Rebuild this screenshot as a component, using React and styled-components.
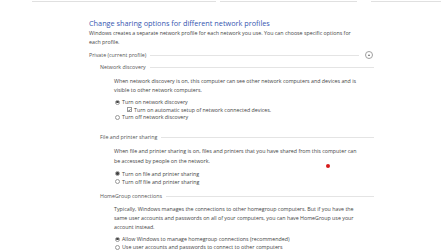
import React from "react";
import styled, { createGlobalStyle } from "styled-components";

const Global = createGlobalStyle`
  html, body { margin: 0; padding: 0; background: #ffffff; }
  body {
    width: 442px; height: 252px; overflow: hidden;
    font-family: "Open Sans", "Noto Sans", "DejaVu Sans", sans-serif;
    color: #333;
    -webkit-font-smoothing: antialiased;
  }
`;

const Page = styled.div`
  position: relative;
  width: 442px;
  height: 252px;
  overflow: hidden;
`;

const TopBar = styled.div`
  display: flex;
  height: 2px;
  padding-left: 32px;
  gap: 4px;
`;

const TopBox = styled.div`
  width: ${(p) => p.w}px;
  height: 1px;
  border-bottom: 1px solid #e0e0e0;
  box-sizing: content-box;
  margin-left: ${(p) => p.ml || 0}px;
`;

const Content = styled.div`
  padding: 15px 68px 0 89px;
`;

const Title = styled.div`
  font-size: 7.3px;
  line-height: 12px;
  color: #3556b0;
  white-space: nowrap;
`;

const Para = styled.div`
  font-size: 5.3px;
  line-height: ${(p) => p.lh || 9}px;
  color: #444;
  white-space: nowrap;
  margin-top: ${(p) => p.mt || 0}px;
  margin-left: ${(p) => p.ml || 0}px;
`;

const HeaderRow = styled.div`
  display: flex;
  align-items: center;
  height: 10px;
  margin-top: ${(p) => p.mt || 0}px;
  margin-left: ${(p) => p.ml || 0}px;
  gap: 4px;
`;

const HeaderLabel = styled.span`
  font-size: 5.3px;
  color: #555;
  white-space: nowrap;
`;

const Rule = styled.div`
  flex: 1;
  height: 1px;
  background: #e4e4e4;
`;

const CollapseBtn = styled.div`
  width: 8px;
  height: 8px;
  border-radius: 50%;
  border: 1px solid #a0a0a0;
  box-sizing: border-box;
  display: flex;
  align-items: center;
  justify-content: center;
  margin-left: 2px;
  margin-right: 1px;
  &::after {
    content: "";
    width: 0;
    height: 0;
    border-left: 1.6px solid transparent;
    border-right: 1.6px solid transparent;
    border-bottom: 2px solid #666;
    margin-top: -0.5px;
  }
`;

const Options = styled.div`
  margin-top: ${(p) => p.mt || 0}px;
  margin-left: 26px;
`;

const Option = styled.div`
  display: flex;
  align-items: center;
  height: ${(p) => p.h || 8}px;
  gap: 2px;
  margin-left: ${(p) => p.ml || 0}px;
`;

const Radio = styled.span`
  width: 5px;
  height: 5px;
  border-radius: 50%;
  border: 0.6px solid #999;
  box-sizing: border-box;
  background: #fff;
  display: inline-flex;
  align-items: center;
  justify-content: center;
  flex: none;
  &::after {
    content: "";
    width: 2.4px;
    height: 2.4px;
    border-radius: 50%;
    background: ${(p) => (p.on ? "#444" : "transparent")};
  }
`;

const Check = styled.span`
  width: 5px;
  height: 5px;
  border: 0.6px solid #999;
  box-sizing: border-box;
  background: #fff;
  display: inline-flex;
  align-items: center;
  justify-content: center;
  flex: none;
  svg { display: block; }
`;

const OptLabel = styled.span`
  font-size: 5.3px;
  color: #444;
  white-space: nowrap;
`;

const Cursor = styled.div`
  position: absolute;
  left: 326px;
  top: 164px;
  width: 4px;
  height: 4px;
  border-radius: 50%;
  background: #d61b1b;
`;

export default function App() {
  return (
    <Page>
      <Global />
      <TopBar>
        <TopBox w={184} />
        <TopBox w={137} />
        <TopBox w={70} ml={10} />
      </TopBar>
      <Content>
        <Title>Change sharing options for different network profiles</Title>
        <Para>
          Windows creates a separate network profile for each network you use. You can choose specific options for
          <br />
          each profile.
        </Para>

        <HeaderRow mt={3}>
          <HeaderLabel>Private (current profile)</HeaderLabel>
          <Rule />
          <CollapseBtn />
        </HeaderRow>

        <HeaderRow mt={2} ml={11}>
          <HeaderLabel>Network discovery</HeaderLabel>
          <Rule />
        </HeaderRow>
        <Para mt={4.5} ml={25}>
          When network discovery is on, this computer can see other network computers and devices and is
          <br />
          visible to other network computers.
        </Para>
        <Options mt={4}>
          <Option h={7.5}>
            <Radio on />
            <OptLabel>Turn on network discovery</OptLabel>
          </Option>
          <Option h={7.5} ml={12}>
            <Check>
              <svg width="4" height="4" viewBox="0 0 10 10">
                <path d="M1.5 5.2 L4 7.8 L8.6 2" fill="none" stroke="#222" strokeWidth="1.8" />
              </svg>
            </Check>
            <OptLabel>Turn on automatic setup of network connected devices.</OptLabel>
          </Option>
          <Option h={7.5}>
            <Radio />
            <OptLabel>Turn off network discovery</OptLabel>
          </Option>
        </Options>

        <HeaderRow mt={11} ml={11}>
          <HeaderLabel>File and printer sharing</HeaderLabel>
          <Rule />
        </HeaderRow>
        <Para mt={5} ml={25} lh={9.5}>
          When file and printer sharing is on, files and printers that you have shared from this computer can
          <br />
          be accessed by people on the network.
        </Para>
        <Options mt={3.5}>
          <Option>
            <Radio on />
            <OptLabel>Turn on file and printer sharing</OptLabel>
          </Option>
          <Option>
            <Radio />
            <OptLabel>Turn off file and printer sharing</OptLabel>
          </Option>
        </Options>

        <HeaderRow mt={5.5} ml={11}>
          <HeaderLabel>HomeGroup connections</HeaderLabel>
          <Rule />
        </HeaderRow>
        <Para mt={3.5} ml={25}>
          Typically, Windows manages the connections to other homegroup computers. But if you have the
          <br />
          same user accounts and passwords on all of your computers, you can have HomeGroup use your
          <br />
          account instead.
        </Para>
        <Options mt={3.5}>
          <Option>
            <Radio on />
            <OptLabel>Allow Windows to manage homegroup connections (recommended)</OptLabel>
          </Option>
          <Option>
            <Radio />
            <OptLabel>Use user accounts and passwords to connect to other computers</OptLabel>
          </Option>
        </Options>
      </Content>
      <Cursor />
    </Page>
  );
}
